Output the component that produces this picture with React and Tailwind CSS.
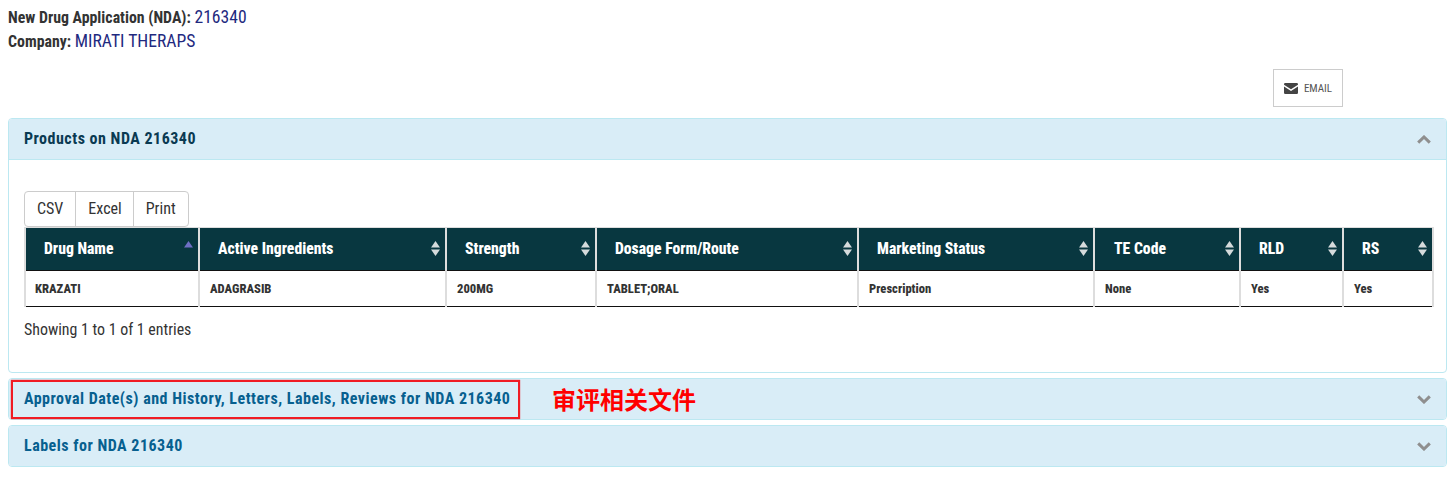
import React from "react";

const headers = [
  { label: "Drug Name", w: "w-[174px] pl-[18px]", first: true },
  { label: "Active Ingredients", w: "w-[247px] pl-[18px]" },
  { label: "Strength", w: "w-[150px] pl-[18px]" },
  { label: "Dosage Form/Route", w: "w-[262px] pl-[18px]" },
  { label: "Marketing Status", w: "w-[236px] pl-[18px]" },
  { label: "TE Code", w: "w-[146px] pl-[19px]" },
  { label: "RLD", w: "w-[103px] pl-[18px]" },
  { label: "RS", w: "w-[90px] pl-[18px]" },
];
const cells = ["KRAZATI", "ADAGRASIB", "200MG", "TABLET;ORAL", "Prescription", "None", "Yes", "Yes"];

function Sort({ first }) {
  return (
    <svg width="9" height="16" viewBox="0 0 9 16" className="absolute right-[5px] top-[13px]">
      <path d="M4.5 0 L9 6.5 H0 Z" fill={first ? "#6f6fc4" : "#d5dbdc"} />
      {!first && <path d="M4.5 15 L9 8.5 H0 Z" fill="#d5dbdc" />}
    </svg>
  );
}

function Chevron({ up }) {
  return (
    <svg width="14" height="9" viewBox="0 0 14 9" fill="none" stroke="#8f8f8f" strokeWidth="3">
      <path d={up ? "M1.2 7.6 L7 2 L12.8 7.6" : "M1.2 1.4 L7 7 L12.8 1.4"} />
    </svg>
  );
}

function PanelHead({ children, color, up }) {
  return (
    <div className={`flex items-center justify-between bg-[#d9edf7] pl-[15px] pr-[15px] ${up ? "h-[41px] border-b border-[#bce8f1]" : "h-[40px]"}`}>
      <span className="text-[16px] font-bold tracking-[0.5px]" style={{ color }}>{children}</span>
      <Chevron up={up} />
    </div>
  );
}

export default function App() {
  return (
    <div className="relative h-[478px] w-[1455px] overflow-hidden bg-white px-[8px] pt-[5px] text-[#333] [font-family:'Roboto',sans-serif] [font-stretch:75%]">
      <div className="h-[24px] text-[15.85px] leading-[24px]"><b className="text-[#333]">New Drug Application (NDA):</b> <span className="text-[17.6px] text-[#1f2a80]">216340</span></div>
      <div className="h-[24px] text-[15.85px] leading-[24px]"><b className="text-[#333]">Company:</b> <span className="text-[17.6px] text-[#1f2a80]">MIRATI THERAPS</span></div>

      <div className="mt-[16px] flex h-[38px] justify-end pr-[104px]">
        <button className="flex h-[38px] w-[70px] items-center justify-center gap-[6px] border border-[#ccc] text-[11px] text-[#555]">
          <svg width="14" height="11" viewBox="0 0 14 11"><path d="M0 1.2 A1.2 1.2 0 0 1 1.2 0 H12.8 A1.2 1.2 0 0 1 14 1.2 V1.8 L7 6.3 L0 1.8 Z M0 3.4 L7 7.9 L14 3.4 V9.8 A1.2 1.2 0 0 1 12.8 11 H1.2 A1.2 1.2 0 0 1 0 9.8 Z" fill="#444" /></svg>
          <span className="mt-[2px]">EMAIL</span>
        </button>
      </div>

      <div className="mt-[11px] overflow-hidden rounded-[4px] border border-[#bce8f1]">
        <PanelHead color="#0a3a52" up>Products on NDA 216340</PanelHead>
        <div className="h-[212px] px-[15px] pt-[31px]">
          <div className="flex h-[36px] w-fit rounded-[4px] border border-[#ccc] text-[16px] text-[#333]">
            <span className="flex items-center border-r border-[#ccc] px-[12px]">CSV</span>
            <span className="flex items-center border-r border-[#ccc] pl-[12px] pr-[11px]">Excel</span>
            <span className="flex items-center px-[12px]">Print</span>
          </div>
          <table className="w-[1408px] table-fixed border-collapse">
            <thead>
              <tr>
                {headers.map((h) => (
                  <th key={h.label} className={`${h.w} relative h-[43px] border-x-2 border-t border-b border-x-[#ddd] border-t-[#ddd] border-b-[#111] bg-[#083740] pb-[1px] text-left text-[15.7px] font-extrabold text-white`}>
                    {h.label}
                    <Sort first={h.first} />
                  </th>
                ))}
              </tr>
            </thead>
            <tbody>
              <tr>
                {cells.map((c, i) => (
                  <td key={i} className="h-[36px] border-x-2 border-b border-x-[#ddd] border-b-[#111] pl-[10px] pt-[1px] text-[12.6px] font-extrabold text-[#333] first:pl-[9px]">{c}</td>
                ))}
              </tr>
            </tbody>
          </table>
          <div className="mt-[12px] text-[15.9px] leading-[22px] text-[#333]">Showing 1 to 1 of 1 entries</div>
        </div>
      </div>

      <div className="mt-[5px] overflow-hidden rounded-[4px] border border-[#bce8f1]">
        <PanelHead color="#07608f">Approval Date(s) and History, Letters, Labels, Reviews for NDA 216340</PanelHead>
      </div>
      <div className="mt-[5px] overflow-hidden rounded-[4px] border border-[#bce8f1]">
        <PanelHead color="#07608f">Labels for NDA 216340</PanelHead>
      </div>

      <div className="absolute left-[11px] top-[380px] h-[39px] w-[509px] border-2 border-[#f01c24] shadow-[0_0_1px_#f01c24]" />
      <div className="absolute left-[552px] top-[384px] text-[24px] font-bold leading-[30px] text-[#ff0000] [font-family:'Noto_Sans_CJK_SC',sans-serif]">审评相关文件</div>
    </div>
  );
}
